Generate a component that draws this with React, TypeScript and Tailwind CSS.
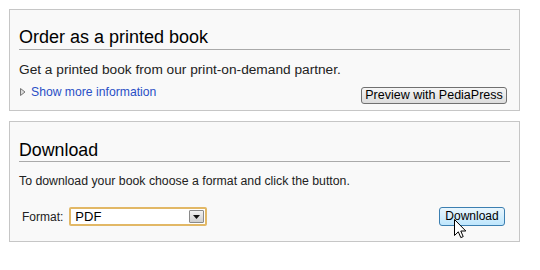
function Cursor() {
  return (
    <svg
      className="pointer-events-none absolute left-[454px] top-[219px]"
      width="13"
      height="20"
      viewBox="0 0 13 20"
    >
      <path
        d="M0.5 0.5 L0.5 16.5 L4.3 12.8 L6.8 18.6 L9.2 17.6 L6.8 12 L11.8 12 Z"
        fill="#ffffff"
        stroke="#000000"
        strokeWidth="1"
      />
    </svg>
  );
}

export default function App() {
  return (
    <div
      className="relative h-[270px] w-[540px] bg-white pl-[9px] pt-[9px] text-[#222]"
      style={{ fontFamily: '"Liberation Sans", Arial, sans-serif' }}
    >
      <div className="flex flex-col gap-[10px]">
        {/* print on demand */}
        <div className="w-[511px] border border-[#c6c6c6] bg-[#f9f9f9] px-[9px] pt-[16px] pb-[6px]">
          <h2 className="border-b border-[#aaaaaa] pb-[1px] text-[18px] leading-[22px] font-normal text-black">
            Order as a printed book
          </h2>
          <p className="mt-[11px] text-[13.7px] leading-[18px]">
            Get a printed book from our print-on-demand partner.
          </p>
          <div className="mt-[5px] flex items-start justify-between">
            <div className="flex items-center gap-[5px] text-[12.2px] leading-[16px]">
              <svg width="6" height="8" viewBox="0 0 6 8" className="ml-[1px]">
                <path d="M0.5 0.5 L5 4 L0.5 7.5 Z" fill="#ddd" stroke="#777" strokeWidth="1" />
              </svg>
              <a className="text-[#2a4fc6] no-underline" href="#">
                Show more information
              </a>
            </div>
            <button className="mt-[3px] mr-[3px] h-[17px] w-[146px] rounded-[3px] border border-[#707070] bg-gradient-to-b from-[#f6f6f6] to-[#dcdcdc] text-[12.5px] leading-[15px] text-black">
              Preview with PediaPress
            </button>
          </div>
        </div>

        {/* download */}
        <div className="w-[511px] border border-[#c6c6c6] bg-[#f9f9f9] px-[9px] pt-[17px] pb-[15px]">
          <h2 className="border-b border-[#aaaaaa] text-[17.8px] leading-[22px] font-normal text-black">
            Download
          </h2>
          <p className="mt-[10px] text-[12.3px] leading-[18px]">
            To download your book choose a format and click the button.
          </p>
          <div className="mt-[17px] flex items-center justify-between">
            <div className="flex items-center gap-[6px] pl-[3px]">
              <label className="text-[12px] leading-[16px]">Format:</label>
              <div className="flex h-[19px] w-[138px] items-center justify-between rounded-[2px] border-2 border-[#e2b866] bg-white pl-[4px] pr-[1px]">
                <span className="text-[13px] leading-[15px] text-black">PDF</span>
                <span className="flex h-[13px] w-[15px] items-center justify-center rounded-[1px] border border-[#8a8a8a] bg-gradient-to-b from-[#f2f2f2] to-[#cfcfcf]">
                  <svg width="7" height="4" viewBox="0 0 7 4">
                    <path d="M0 0 L7 0 L3.5 4 Z" fill="#111" />
                  </svg>
                </span>
              </div>
            </div>
            <button className="mr-[5px] h-[19px] w-[66px] rounded-[3px] border border-[#3c7fb1] bg-gradient-to-b from-[#eaf6fd] to-[#bee6fd] text-[12px] leading-[15px] text-black">
              Download
            </button>
          </div>
        </div>
      </div>
      <Cursor />
    </div>
  );
}
